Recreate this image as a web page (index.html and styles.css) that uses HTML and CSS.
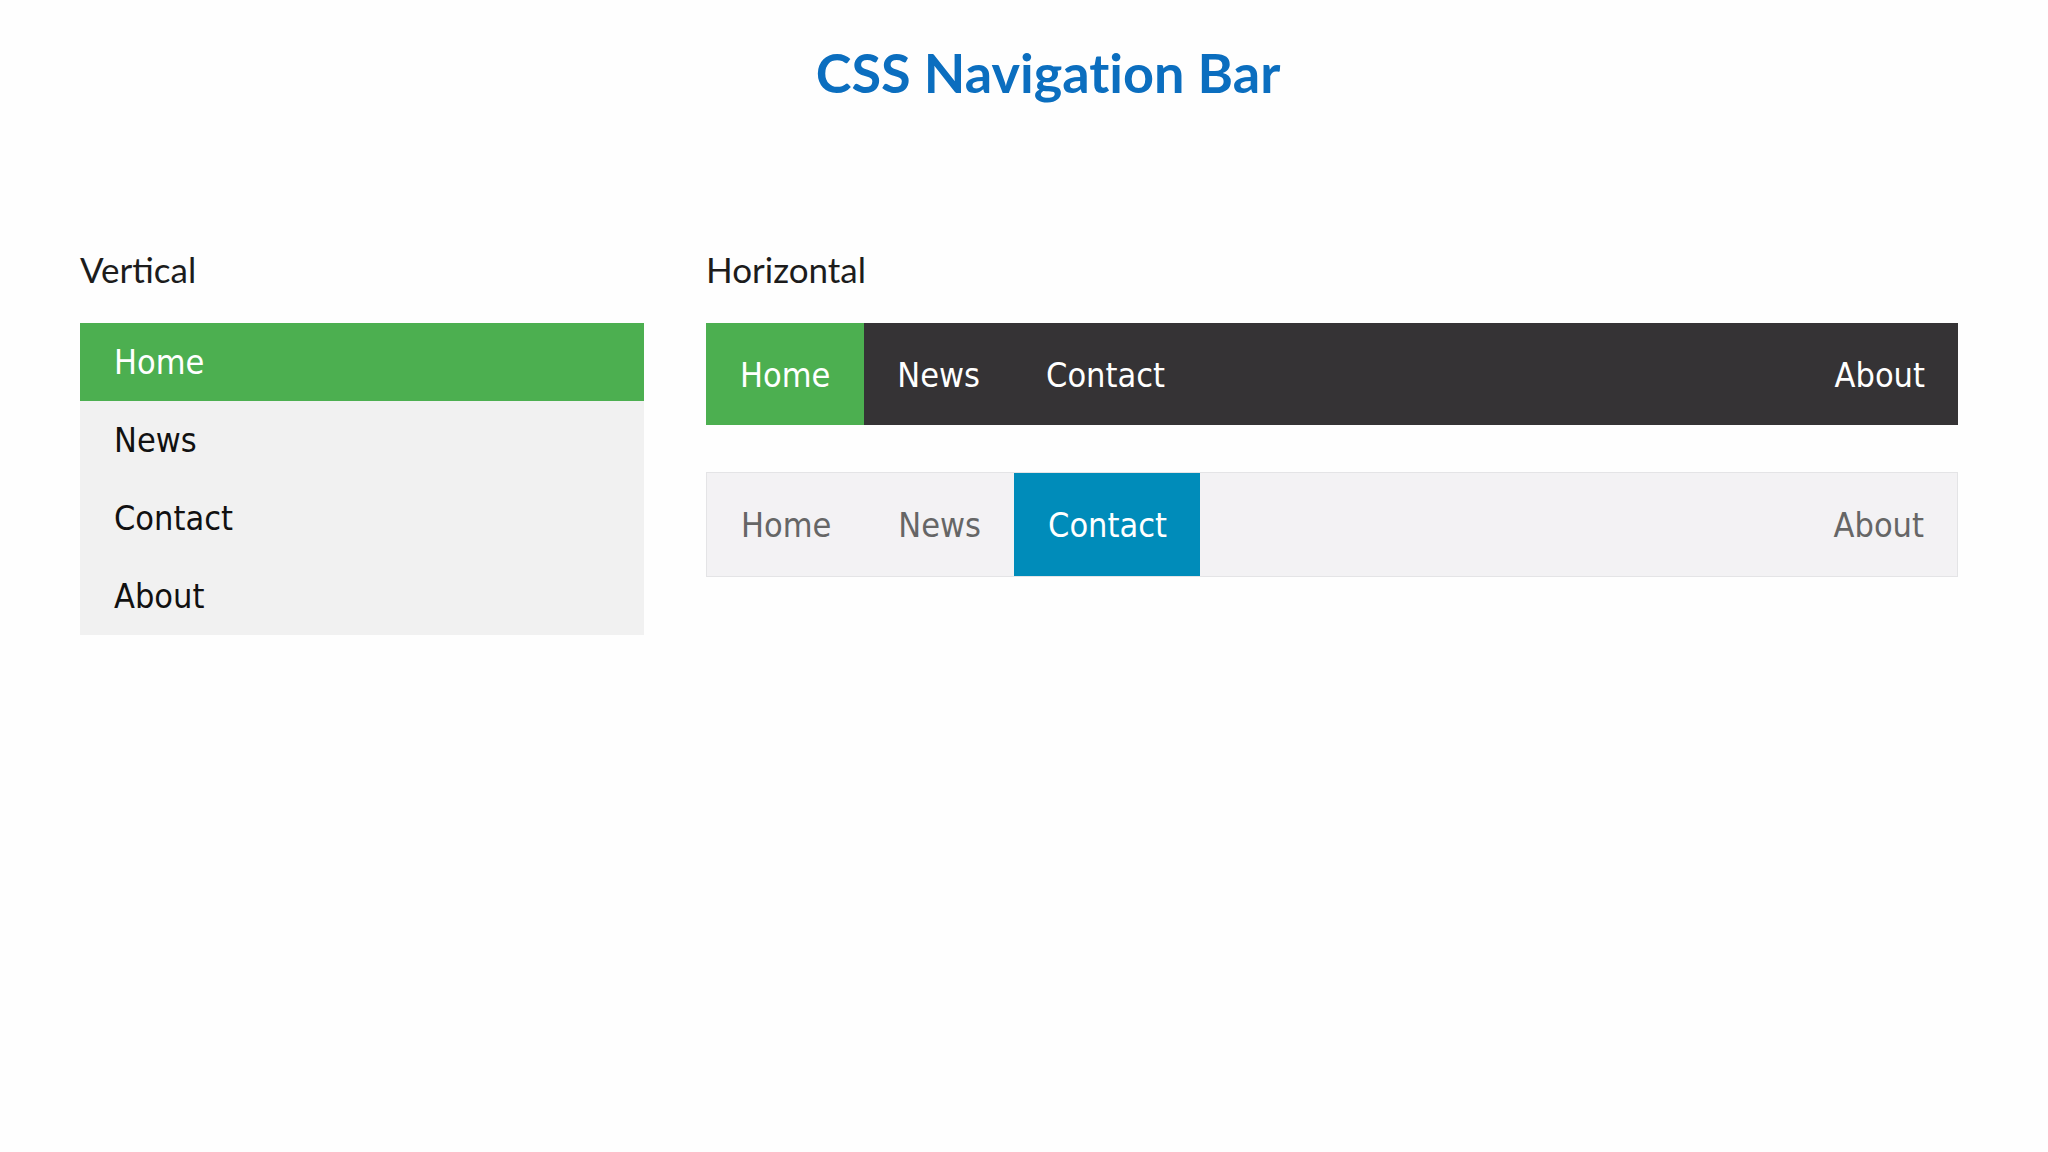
FILE: index.html
```html
<!DOCTYPE html>
<html lang="en">
<head>
<meta charset="utf-8">
<title>CSS Navigation Bar</title>
<link rel="stylesheet" href="styles.css">
</head>
<body>
<div class="page">
  <h1 class="title">CSS Navigation Bar</h1>
  <div class="columns">
    <section class="col col-vertical">
      <p class="label">Vertical</p>
      <ul class="vnav">
        <li><a class="active" href="#">Home</a></li>
        <li><a href="#">News</a></li>
        <li><a href="#">Contact</a></li>
        <li><a href="#">About</a></li>
      </ul>
    </section>
    <section class="col col-horizontal">
      <p class="label">Horizontal</p>
      <ul class="hnav hnav-dark">
        <li><a class="active" href="#">Home</a></li>
        <li><a href="#">News</a></li>
        <li><a href="#">Contact</a></li>
        <li class="right"><a href="#">About</a></li>
      </ul>
      <ul class="hnav hnav-light">
        <li><a href="#">Home</a></li>
        <li><a href="#">News</a></li>
        <li><a class="active" href="#">Contact</a></li>
        <li class="right"><a href="#">About</a></li>
      </ul>
    </section>
  </div>
</div>
</body>
</html>
```
FILE: styles.css
```css
html, body {
  margin: 0;
  padding: 0;
  background: #fefefe;
}

.page {
  padding: 47px 90px 0 80px;
}

.title {
  margin: 0;
  padding-left: 58px;
  text-align: center;
  font-family: Lato, "Open Sans", sans-serif;
  font-weight: 700;
  font-size: 54px;
  line-height: 52px;
  color: #0b6ebf;
  font-variant-ligatures: none;
}

.columns {
  display: flex;
  gap: 62px;
  margin-top: 150px;
}

.col-vertical {
  width: 564px;
  flex: none;
}

.col-horizontal {
  flex: 1;
}

.label {
  margin: 0 0 34px;
  font-family: Lato, "Open Sans", sans-serif;
  font-size: 35px;
  line-height: 40px;
  color: #1c1c1c;
}

.vnav, .hnav {
  list-style: none;
  margin: 0;
  padding: 0;
  font-family: "DejaVu Sans Condensed", "DejaVu Sans", sans-serif;
  font-stretch: condensed;
  font-size: 34px;
}

.vnav a, .hnav a {
  text-decoration: none;
  display: block;
}

.vnav {
  background: #f1f1f1;
}

.vnav a {
  height: 77px;
  line-height: 77px;
  padding: 1px 34px 0;
  color: #111;
}

.vnav a.active {
  background: #4caf50;
  color: #fff;
}

.hnav {
  display: flex;
}

.hnav .right {
  margin-left: auto;
}

.hnav-dark {
  background: #353335;
}

.hnav-dark a {
  height: 100px;
  line-height: 100px;
  padding: 2px 33px 0;
  color: #fff;
}

.hnav-dark a.active {
  background: #4caf50;
  padding: 2px 34px 0;
}

.hnav-light {
  margin-top: 47px;
  background: #f3f2f4;
  border: 1px solid #e4e4e6;
}

.hnav-light a {
  height: 102px;
  line-height: 102px;
  padding: 1px 33px 0 34px;
  color: #666;
}

.hnav-light a.active {
  background: #008cba;
  color: #fff;
}
```
